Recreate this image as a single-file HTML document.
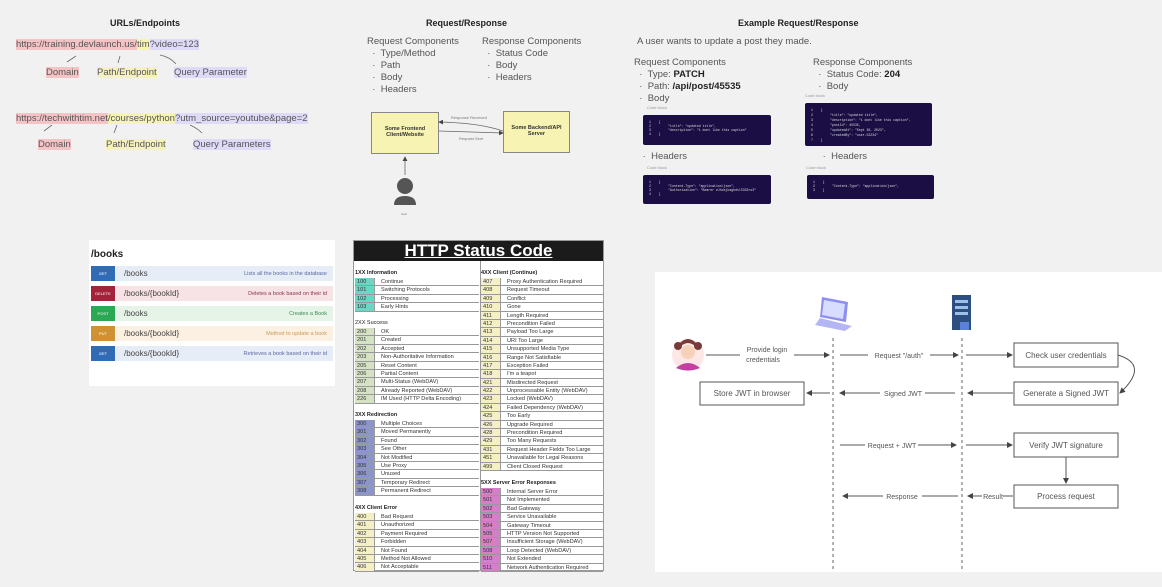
<!DOCTYPE html>
<html><head><meta charset="utf-8">
<style>
*{margin:0;padding:0;box-sizing:border-box}
body{width:1162px;height:587px;overflow:hidden;background:#f1f1f1;font-family:"Liberation Sans",sans-serif;color:#444;position:relative}
.a{position:absolute;white-space:nowrap}
.h{font-weight:bold;font-size:9px;color:#222}
.t{font-size:9.5px;color:#555}
.pk{background:#f4c3c6}.yl{background:#f6f4b5}.lv{background:#dedaf8}
.code{position:absolute;background:#1b0e44;border-radius:2px;color:#ddd;font-family:"Liberation Mono",monospace;font-size:3.2px;line-height:4px;padding:5px 6px;white-space:pre}
.cb{font-size:4px;color:#999}
.tbl{position:absolute;left:353px;top:240px;width:251px;height:331px;background:#fff;border:1px solid #999}
.tbl .top{height:20px;background:#1b1b1b;color:#fff;font-weight:bold;font-size:17px;text-align:center;line-height:20px;text-decoration:underline;text-decoration-thickness:1px}
.g{position:absolute;font-size:5.5px;color:#222}
.g b{display:block;height:9px;line-height:9px;font-size:5.5px}
.r{display:flex;height:8.4px;line-height:8.2px;border-bottom:1px solid #999;font-size:5.6px;color:#333}
.r span:first-child{width:20px;padding-left:2px;border-right:1px solid #999}
.r span:last-child{padding-left:6px}
.c1 span:first-child{background:#6dd5c6}.c2 span:first-child{background:#d5e2c3}.c3 span:first-child{background:#8c95c9}.c4 span:first-child{background:#f5efc4}.c5 span:first-child{background:#d57fc8}
.bk{position:absolute;left:91px;width:242px;height:15px;display:flex;align-items:center;font-size:8px;color:#444}
.bk i{font-style:normal;width:24px;height:15px;color:#fff;font-size:4px;text-align:center;line-height:15px;margin-right:9px}
.bk em{font-style:normal;margin-left:auto;margin-right:6px;font-size:5.5px}
</style></head><body>
<!-- URLs -->
<div class="a h" style="left:110px;top:18px">URLs/Endpoints</div>
<div class="a t" style="left:16px;top:39px"><span class="pk">https://training.devlaunch.us/</span><span class="yl">tim</span><span class="lv">?video=123</span></div>
<div class="a t pk" style="left:46px;top:67px">Domain</div>
<div class="a t yl" style="left:97px;top:67px">Path/Endpoint</div>
<div class="a t lv" style="left:174px;top:67px">Query Parameter</div>
<div class="a t" style="left:16px;top:113px"><span class="pk">https://techwithtim.net</span><span class="yl">/courses/python</span><span class="lv">?utm_source=youtube&amp;page=2</span></div>
<div class="a t pk" style="left:38px;top:139px">Domain</div>
<div class="a t yl" style="left:106px;top:139px">Path/Endpoint</div>
<div class="a t lv" style="left:193px;top:139px">Query Parameters</div>
<!-- Request/Response -->
<div class="a h" style="left:426px;top:18px">Request/Response</div>
<div class="a t" style="left:367px;top:36px;line-height:12px">Request Components<br>&nbsp;&nbsp;·&nbsp; Type/Method<br>&nbsp;&nbsp;·&nbsp; Path<br>&nbsp;&nbsp;·&nbsp; Body<br>&nbsp;&nbsp;·&nbsp; Headers</div>
<div class="a t" style="left:482px;top:36px;line-height:12px">Response Components<br>&nbsp;&nbsp;·&nbsp; Status Code<br>&nbsp;&nbsp;·&nbsp; Body<br>&nbsp;&nbsp;·&nbsp; Headers</div>
<div class="a" style="left:371px;top:112px;width:68px;height:42px;background:#f6f3b3;border:1px solid #888;font-size:5.5px;font-weight:bold;text-align:center;padding-top:13px;color:#333">Some Frontend<br>Client/Website</div>
<div class="a" style="left:503px;top:111px;width:67px;height:42px;background:#f6f3b3;border:1px solid #888;font-size:5.5px;font-weight:bold;text-align:center;padding-top:13px;color:#333">Some Backend/API<br>Server</div>
<div class="a" style="left:451px;top:115px;font-size:4px;color:#777">Response Received</div>
<div class="a" style="left:459px;top:136px;font-size:4px;color:#777">Request Sent</div>
<div class="a" style="left:401px;top:212px;font-size:3px;color:#777">User</div>
<!-- Example -->
<div class="a h" style="left:738px;top:18px">Example Request/Response</div>
<div class="a t" style="left:637px;top:36px">A user wants to update a post they made.</div>
<div class="a t" style="left:634px;top:57px;line-height:12px">Request Components<br>&nbsp;&nbsp;·&nbsp; Type: <b style="color:#222">PATCH</b><br>&nbsp;&nbsp;·&nbsp; Path: <b style="color:#222">/api/post/45535</b><br>&nbsp;&nbsp;·&nbsp; Body</div>
<div class="a cb" style="left:647px;top:105px">Code block</div>
<div class="code" style="left:643px;top:115px;width:128px;height:30px">1    {
2         "title": "updated title",
3         "description": "i dont like this caption"
4    }</div>
<div class="a t" style="left:640px;top:151px">&nbsp;·&nbsp; Headers</div>
<div class="a cb" style="left:647px;top:165px">Code block</div>
<div class="code" style="left:643px;top:175px;width:128px;height:29px">1    {
2         "Content-Type": "application/json",
3         "Authorization": "Bearer eJhdsjkaghdsl5333rs3"
4    }</div>
<div class="a t" style="left:813px;top:57px;line-height:12px">Response Components<br>&nbsp;&nbsp;·&nbsp; Status Code: <b style="color:#222">204</b><br>&nbsp;&nbsp;·&nbsp; Body</div>
<div class="a cb" style="left:805px;top:93px">Code block</div>
<div class="code" style="left:805px;top:103px;width:127px;height:43px;line-height:5px">1    {
2         "title": "updated title",
3         "description": "i dont like this caption",
4         "postId": 45535,
5         "updatedAt": "Sept 30, 2023",
6         "createdBy": "user-52234"
7    }</div>
<div class="a t" style="left:820px;top:151px">&nbsp;·&nbsp; Headers</div>
<div class="a cb" style="left:806px;top:165px">Code block</div>
<div class="code" style="left:807px;top:175px;width:127px;height:24px">1    {
2         "Content-Type": "application/json",
3    }</div>
<!-- books -->
<div class="a" style="left:89px;top:240px;width:246px;height:146px;background:#fff"></div>
<div class="a" style="left:91px;top:249px;font-weight:bold;font-size:10px;color:#222">/books</div>
<div class="bk" style="top:266px;background:#e6edf7"><i style="background:#2f6cb5">GET</i>/books<em style="color:#5b6aa0">Lists all the books in the database</em></div>
<div class="bk" style="top:286px;background:#f7e3e5"><i style="background:#a3233a">DELETE</i>/books/{bookId}<em style="color:#8a3450">Deletes a book based on their id</em></div>
<div class="bk" style="top:306px;background:#e5f4e6"><i style="background:#2aa853">POST</i>/books<em style="color:#3f8a58">Creates a Book</em></div>
<div class="bk" style="top:326px;background:#fbf0e2"><i style="background:#cf9232">PUT</i>/books/{bookId}<em style="color:#c89a55">Method to update a book</em></div>
<div class="bk" style="top:346px;background:#e6edf7"><i style="background:#2f6cb5">GET</i>/books/{bookId}<em style="color:#5b6aa0">Retrieves a book based on their id</em></div>
<!-- status table -->
<div class="tbl"><div class="top">HTTP Status Code</div>
<div style="position:absolute;left:126px;top:20px;bottom:0;border-left:1px solid #999"></div></div>
<div class="g" style="left:355px;top:269px;width:124px"><b>1XX Information</b>
<div class="r c1"><span>100</span><span>Continue</span></div><div class="r c1"><span>101</span><span>Switching Protocols</span></div><div class="r c1"><span>102</span><span>Processing</span></div><div class="r c1"><span>103</span><span>Early Hints</span></div></div>
<div class="g" style="left:355px;top:319px;width:124px"><b style="font-weight:normal">2XX Success</b>
<div class="r c2"><span>200</span><span>OK</span></div><div class="r c2"><span>201</span><span>Created</span></div><div class="r c2"><span>202</span><span>Accepted</span></div><div class="r c2"><span>203</span><span>Non-Authoritative Information</span></div><div class="r c2"><span>205</span><span>Reset Content</span></div><div class="r c2"><span>206</span><span>Partial Content</span></div><div class="r c2"><span>207</span><span>Multi-Status (WebDAV)</span></div><div class="r c2"><span>208</span><span>Already Reported (WebDAV)</span></div><div class="r c2"><span>226</span><span>IM Used (HTTP Delta Encoding)</span></div></div>
<div class="g" style="left:355px;top:411px;width:124px"><b>3XX Redirection</b>
<div class="r c3"><span>300</span><span>Multiple Choices</span></div><div class="r c3"><span>301</span><span>Moved Permanently</span></div><div class="r c3"><span>302</span><span>Found</span></div><div class="r c3"><span>303</span><span>See Other</span></div><div class="r c3"><span>304</span><span>Not Modified</span></div><div class="r c3"><span>305</span><span>Use Proxy</span></div><div class="r c3"><span>306</span><span>Unused</span></div><div class="r c3"><span>307</span><span>Temporary Redirect</span></div><div class="r c3"><span>308</span><span>Permanent Redirect</span></div></div>
<div class="g" style="left:355px;top:504px;width:124px"><b>4XX Client Error</b>
<div class="r c4"><span>400</span><span>Bad Request</span></div><div class="r c4"><span>401</span><span>Unauthorized</span></div><div class="r c4"><span>402</span><span>Payment Required</span></div><div class="r c4"><span>403</span><span>Forbidden</span></div><div class="r c4"><span>404</span><span>Not Found</span></div><div class="r c4"><span>405</span><span>Method Not Allowed</span></div><div class="r c4"><span>406</span><span>Not Acceptable</span></div></div>
<div class="g" style="left:481px;top:269px;width:122px"><b>4XX Client (Continue)</b>
<div class="r c4"><span>407</span><span>Proxy Authentication Required</span></div><div class="r c4"><span>408</span><span>Request Timeout</span></div><div class="r c4"><span>409</span><span>Conflict</span></div><div class="r c4"><span>410</span><span>Gone</span></div><div class="r c4"><span>411</span><span>Length Required</span></div><div class="r c4"><span>412</span><span>Precondition Failed</span></div><div class="r c4"><span>413</span><span>Payload Too Large</span></div><div class="r c4"><span>414</span><span>URI Too Large</span></div><div class="r c4"><span>415</span><span>Unsupported Media Type</span></div><div class="r c4"><span>416</span><span>Range Not Satisfiable</span></div><div class="r c4"><span>417</span><span>Exception Failed</span></div><div class="r c4"><span>418</span><span>I'm a teapot</span></div><div class="r c4"><span>421</span><span>Misdirected Request</span></div><div class="r c4"><span>422</span><span>Unprocessable Entity (WebDAV)</span></div><div class="r c4"><span>423</span><span>Locked (WebDAV)</span></div><div class="r c4"><span>424</span><span>Failed Dependency (WebDAV)</span></div><div class="r c4"><span>425</span><span>Too Early</span></div><div class="r c4"><span>426</span><span>Upgrade Required</span></div><div class="r c4"><span>428</span><span>Precondition Required</span></div><div class="r c4"><span>429</span><span>Too Many Requests</span></div><div class="r c4"><span>431</span><span>Request Header Fields Too Large</span></div><div class="r c4"><span>451</span><span>Unavailable for Legal Reasons</span></div><div class="r c4"><span>499</span><span>Client Closed Request</span></div></div>
<div class="g" style="left:481px;top:479px;width:122px"><b>5XX Server Error Responses</b>
<div class="r c5"><span>500</span><span>Internal Server Error</span></div><div class="r c5"><span>501</span><span>Not Implemented</span></div><div class="r c5"><span>502</span><span>Bad Gateway</span></div><div class="r c5"><span>503</span><span>Service Unavailable</span></div><div class="r c5"><span>504</span><span>Gateway Timeout</span></div><div class="r c5"><span>505</span><span>HTTP Version Not Supported</span></div><div class="r c5"><span>507</span><span>Insufficient Storage (WebDAV)</span></div><div class="r c5"><span>508</span><span>Loop Detected (WebDAV)</span></div><div class="r c5"><span>510</span><span>Not Extended</span></div><div class="r c5"><span>511</span><span>Network Authentication Required</span></div></div>
<!-- JWT panel -->
<div class="a" style="left:655px;top:272px;width:507px;height:300px;background:#fff"></div>
<svg class="a" style="left:0;top:0" width="1162" height="587" viewBox="0 0 1162 587">
<defs><marker id="m" markerWidth="6" markerHeight="6" refX="5" refY="3" orient="auto"><path d="M0,0L6,3L0,6z" fill="#444"/></marker></defs>
<g stroke="#666" stroke-width="0.8" fill="none">
<path d="M76 56 L67 62" /><path d="M120 56 L118 63"/><path d="M160 55 Q170 57 176 64"/>
<path d="M52 125 L44 131"/><path d="M117 125 L114 133"/><path d="M190 125 Q197 128 202 133"/>
<path d="M439 131 L503 133" marker-end="url(#m)"/><path d="M503 131 Q480 123 439 122" marker-end="url(#m)"/>
<path d="M405 175 L405 157" marker-end="url(#m)"/>
</g>
<circle cx="405" cy="186" r="8" fill="#555"/><path d="M394 205 Q394 196 405 196 Q416 196 416 205 Z" fill="#555"/>
<g stroke="#666" stroke-width="1" fill="none" stroke-dasharray="3,3"><path d="M833 338V572"/><path d="M962 338V572"/></g>
<g stroke="#555" stroke-width="1" fill="none">
<path d="M706 355H740"/><path d="M794 355H829" marker-end="url(#m)"/>
<path d="M840 355H868"/><path d="M930 355H958" marker-end="url(#m)"/>
<path d="M966 355H1012" marker-end="url(#m)"/>
<path d="M1118 355 Q1150 365 1120 393" marker-end="url(#m)"/>
<path d="M1013 393H968" marker-end="url(#m)"/>
<path d="M955 393H925"/><path d="M880 393H840" marker-end="url(#m)"/>
<path d="M830 393H807" marker-end="url(#m)"/>
<path d="M840 445H865"/><path d="M918 445H956" marker-end="url(#m)"/>
<path d="M966 445H1012" marker-end="url(#m)"/>
<path d="M1066 457V483" marker-end="url(#m)"/>
<path d="M1013 496H1003"/><path d="M982 496H968" marker-end="url(#m)"/>
<path d="M958 496H922"/><path d="M883 496H843" marker-end="url(#m)"/>
</g>
<g fill="#fff" stroke="#555" stroke-width="1"><rect x="1014" y="343" width="104" height="24"/><rect x="1014" y="382" width="104" height="23"/><rect x="700" y="382" width="104" height="23"/><rect x="1014" y="433" width="104" height="24"/><rect x="1014" y="485" width="104" height="23"/></g>
<g font-family="Liberation Sans" font-size="8" fill="#555" text-anchor="middle">
<text x="1066" y="358">Check user credentials</text><text x="1066" y="396">Generate a Signed JWT</text><text x="752" y="396">Store JWT in browser</text><text x="1066" y="448">Verify JWT signature</text><text x="1066" y="499">Process request</text>
<text x="767" y="352" font-size="7">Provide login</text><text x="763" y="362" font-size="7">credentials</text>
<text x="899" y="358" font-size="7">Request "/auth"</text><text x="903" y="396" font-size="7">Signed JWT</text><text x="892" y="448" font-size="7">Request + JWT</text><text x="902" y="499" font-size="7">Response</text><text x="993" y="499" font-size="7">Result</text>
</g>
<circle cx="688" cy="355" r="16" fill="#fde6e6"/><circle cx="688" cy="352" r="7" fill="#f6d0b8"/><path d="M679 348 Q688 338 697 348 L697 344 Q688 334 679 344Z" fill="#7a3a3a"/><circle cx="678" cy="346" r="4" fill="#7a3a3a"/><circle cx="698" cy="346" r="4" fill="#7a3a3a"/><path d="M676 368 Q688 358 700 368 Q688 373 676 368Z" fill="#c23ea0"/>
<path d="M822 297 L848 302 L846 322 L820 317Z" fill="#8d8ef0"/><path d="M824 300 L845 304 L843 319 L822 315Z" fill="#d8dcff"/><path d="M815 325 L845 331 L852 326 L820 318Z" fill="#b4b6f4"/>
<rect x="952" y="295" width="19" height="35" fill="#2c4f80"/><rect x="955" y="300" width="13" height="3" fill="#9fc0e6"/><rect x="955" y="306" width="13" height="3" fill="#9fc0e6"/><rect x="955" y="312" width="13" height="3" fill="#9fc0e6"/><path d="M960 322h9v8h-9z" fill="#5c7fd8"/>
</svg>
</body></html>
